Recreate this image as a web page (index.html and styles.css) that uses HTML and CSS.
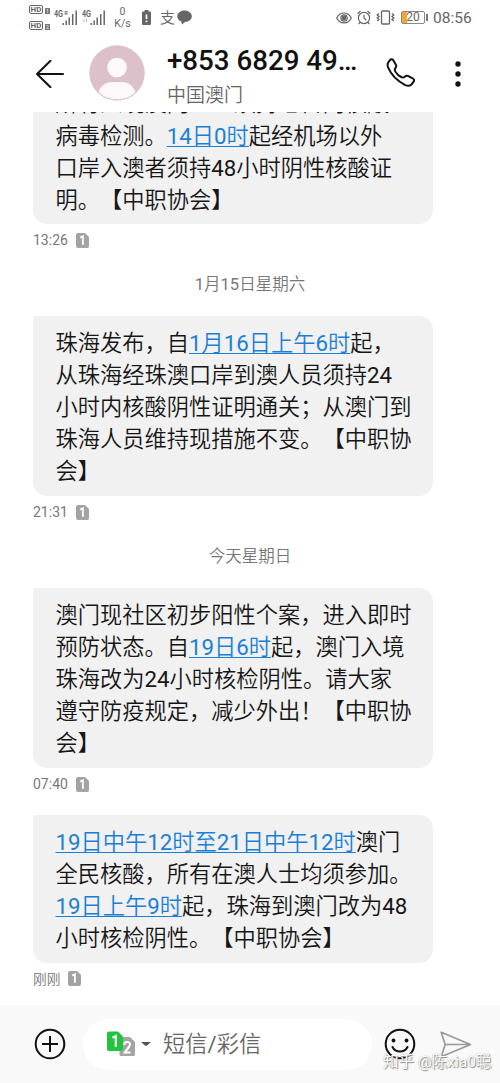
FILE: index.html
```
<!DOCTYPE html>
<html lang="zh-CN">
<head>
<meta charset="utf-8">
<title>短信</title>
<link rel="stylesheet" href="styles.css">
</head>
<body>
<svg width="0" height="0" class="defs">
  <symbol id="sim" viewBox="0 0 13 15"><path d="M2 0h7l4 4v9a2 2 0 0 1-2 2H2a2 2 0 0 1-2-2V2a2 2 0 0 1 2-2z" fill="#a3a3a3"/><path d="M4.2 4.6 6.9 3.2v8.6" fill="none" stroke="#fff" stroke-width="1.8"/></symbol>
</svg>
<div class="screen">
  <div class="status">
    <div class="hds"><div class="hd"><b>HD</b><i>1</i></div><div class="hd"><b>HD</b><i>2</i></div></div>
    <svg class="signal" width="24" height="17" viewBox="0 0 24 17"><text x="0" y="7.5" class="sig-text" textLength="9" lengthAdjust="spacingAndGlyphs">4G</text><text x="10.500" y="6" class="sig-small">R</text><path d="M9.200 14v2M12.200 11.500V16M15.200 8.500V16M18.700 5V16M22.200 1.500V16" stroke="#666" stroke-width="1.500"/></svg>
    <svg class="signal two" width="24" height="17" viewBox="0 0 24 17"><text x="0" y="7.5" class="sig-text" textLength="9" lengthAdjust="spacingAndGlyphs">4G</text><path d="M2 10v3m2.500-3v3" stroke="#bbb"/><path d="M9.200 14v2M12.200 11.500V16M15.200 8.500V16M18.700 5V16M22.200 1.500V16" stroke="#666" stroke-width="1.500"/></svg>
    <div class="rate"><span>0</span><span>K/s</span></div>
    <svg class="batt-alert" width="9" height="15" viewBox="0 0 9 15"><path d="M2.500 0h4v1.500H8q1 0 1 1V14q0 1-1 1H1q-1 0-1-1V2.500q0-1 1-1h1.500z" fill="#666"/><path d="M4.500 4.500v4.500m0 1.500v1.800" stroke="#fff" stroke-width="1.700"/></svg>
    <span class="zhi">支</span>
    <svg class="chat" width="15" height="15" viewBox="0 0 15 15"><path d="M7.500.5C3.400.5.300 3 .300 6.300c0 2.500 1.700 4.400 4 5.200L5 14.500l3-2.500c4-.1 6.800-2.500 6.800-5.700C14.800 3 11.600.5 7.500.5z" fill="#666"/></svg>
    <svg class="eye" width="16" height="12" viewBox="0 0 16 12" fill="none" stroke="#666" stroke-width="1.200"><path d="M.7 6C4-.7 12-.7 15.300 6 12 12.500 4 12.500.7 6z"/><circle cx="8" cy="6" r="3.200"/><circle cx="8" cy="6" r="1.800" fill="#666"/></svg>
    <svg class="alarm" width="14" height="15" viewBox="0 0 14 15" fill="none" stroke="#666" stroke-width="1.200"><circle cx="7" cy="8" r="5.600"/><path d="M7 4.800V8l2.200 2M.6 3.800 3.500 1M13.400 3.800 10.500 1M3 12.500l-1.300 1.500m9.300-1.500 1.300 1.500"/></svg>
    <svg class="vibrate" width="19" height="15" viewBox="0 0 19 15" fill="none" stroke="#666" stroke-width="1.300"><rect x="5.500" y="1" width="8" height="13" rx="1"/><path d="M3 3.500 1.200 5 3 6.500 1.200 8 3 9.500 1.200 11M16 3.500 17.800 5 16 6.500 17.800 8 16 9.500l1.800 1.500"/></svg>
    <div class="battery"><div class="cell">20</div><span class="nub"></span></div>
    <span class="clock">08:56</span>
  </div>
  <header class="header">
    <svg class="back" width="28" height="28" viewBox="0 0 28 28" fill="none" stroke="#111" stroke-width="2" stroke-linecap="round" stroke-linejoin="round"><path d="M27 14H1M14.500 .8 1 14l13.500 13.200"/></svg>
    <svg class="avatar" width="56" height="56" viewBox="0 0 56 56"><circle cx="28" cy="28" r="27.700" fill="#dcc0ca"/><circle cx="28" cy="22.500" r="9.800" fill="#fdf9fb"/><path d="M9.500 47C12 40 18 37 23 37h10c6 0 11 3.500 13.500 10C41.500 52 35 54.300 28 54.300S14.500 52 9.500 47z" fill="#fdf9fb"/></svg>
    <div class="who"><div class="number">+853 6829 49…</div><div class="place">中国澳门</div></div>
    <svg class="phone" width="30" height="30" viewBox="0 0 30 30" fill="none" stroke="#111" stroke-width="2" stroke-linejoin="round"><path d="M2.200 4.600 3.800 2.300C4.800 1 6.500 1 7.300 2.300L10 7c.6 1.200.3 2-.6 3-.9.900-.8 2 0 3.600 1.400 2.600 3.700 4.600 6.200 5.600 1.400.6 2.500.2 3.300-.6.900-.9 1.800-1.200 3-.7l4.800 2.400c1.400.700 1.700 2.200.9 3.300l-1.800 2.500c-1.400 2-3.900 2.200-7 .7C10.500 22.500 5.500 17.500 2.200 9.700c-.8-2-.8-3.700 0-5.100z"/></svg>
    <svg class="more" width="6" height="26" viewBox="0 0 6 26" fill="#111"><circle cx="3" cy="3" r="2.700"/><circle cx="3" cy="13" r="2.700"/><circle cx="3" cy="23" r="2.700"/></svg>
  </header>
  <main class="thread">
    <div class="bubble first"><div class="scrolled">所有入境澳门人士须持七日内核酸</div>病毒检测。<a>14日0时</a>起经机场以外<br>口岸入澳者须持48小时阴性核酸证<br>明。【中职协会】</div>
    <div class="meta">13:26<svg width="13" height="15"><use href="#sim"/></svg></div>
    <div class="day">1月15日星期六</div>
    <div class="bubble">珠海发布，自<a>1月16日上午6时</a>起，<br>从珠海经珠澳口岸到澳人员须持24<br>小时内核酸阴性证明通关；从澳门到<br>珠海人员维持现措施不变。【中职协<br>会】</div>
    <div class="meta">21:31<svg width="13" height="15"><use href="#sim"/></svg></div>
    <div class="day">今天星期日</div>
    <div class="bubble">澳门现社区初步阳性个案，进入即时<br>预防状态。自<a>19日6时</a>起，澳门入境<br>珠海改为24小时核检阴性。请大家<br>遵守防疫规定，减少外出！【中职协<br>会】</div>
    <div class="meta">07:40<svg width="13" height="15"><use href="#sim"/></svg></div>
    <div class="bubble last"><a>19日中午12时至21日中午12时</a>澳门<br>全民核酸，所有在澳人士均须参加。<br><a>19日上午9时</a>起，珠海到澳门改为48<br>小时核检阴性。【中职协会】</div>
    <div class="meta now">刚刚<svg width="13" height="15"><use href="#sim"/></svg></div>
  </main>
  <footer class="composer">
    <svg class="plus" width="32" height="32" viewBox="0 0 32 32" fill="none" stroke="#111" stroke-width="2"><circle cx="16" cy="16" r="14.300"/><path d="M16 8v16M8 16h16"/></svg>
    <div class="field">
      <svg class="sims" width="29" height="26" viewBox="0 0 29 26"><path d="M14 6h9l5 5v12.500q0 1.500-1.500 1.500H14q-1.500 0-1.500-1.500V7.500Q12.500 6 14 6z" fill="#a5a5a5"/><path d="M2 .5h9l5 5V18q0 2-2 2H2q-2 0-2-2V2.500q0-2 2-2z" fill="#22c43c"/><path d="M5.500 6.800 8.800 5v11" fill="none" stroke="#fff" stroke-width="2.200"/><path d="M17.200 14c0-4 5.800-4 5.800-.4 0 2.400-3.500 4.900-5.300 7.900h5.800" fill="none" stroke="#fff" stroke-width="2"/></svg>
      <svg class="caret" width="10" height="4" viewBox="0 0 10 4"><path d="M0 0h10L6 3.500q-1 .8-2 0z" fill="#555"/></svg>
      <span class="hint">短信/彩信</span>
    </div>
    <svg class="smile" width="32" height="32" viewBox="0 0 32 32" fill="none" stroke="#111" stroke-width="2"><circle cx="16" cy="16" r="14.300"/><path d="M8.500 19c3 6 12 6 15 0" stroke-linecap="round"/><g fill="#111" stroke="none"><circle cx="9.500" cy="12.500" r="1.900"/><circle cx="22.500" cy="12.500" r="1.900"/></g></svg>
    <svg class="send" width="32" height="27" viewBox="0 0 32 27" fill="none" stroke="#999" stroke-width="1.700" stroke-linejoin="round"><path d="M1.200 1.200 30.500 13.500 1.200 25.800l4-12.300zM5.200 13.500h25"/></svg>
    <div class="watermark">知乎 @陈xia0聪</div>
  </footer>
</div>
</body>
</html>
```

FILE: styles.css
```
* { box-sizing: border-box; }
body { margin: 0; background: #fff; font-family: Roboto, "Noto Sans CJK SC DemiLight", "Noto Sans CJK SC", sans-serif; text-spacing-trim: space-all; }
svg { display: block; flex: none; }
.defs { display: none; }
.screen { width: 500px; height: 1083px; display: flex; flex-direction: column; overflow: hidden; }

.status { height: 34px; flex: none; display: flex; align-items: center; padding: 1px 0 0 29px; color: #666; }
.hds { width: 21px; display: flex; flex-direction: column; gap: 7px; }
.hd { display: flex; align-items: flex-end; gap: 2px; height: 9px; }
.hd b { width: 14px; height: 9px; border: 1px solid #666; border-radius: 2px; font-size: 8px; line-height: 7.5px; text-align: center; }
.hd i { width: 5px; height: 6px; background: #777; color: #fff; font: 5px/6px Roboto, sans-serif; text-align: center; }
.signal { margin-left: 4px; }
.signal.two { margin-left: 4px; }
.sig-text { font: bold 9px Roboto, sans-serif; fill: #666; }
.sig-small { font: bold 5px Roboto, sans-serif; fill: #666; }
.rate { width: 17px; margin-left: 8px; display: flex; flex-direction: column; align-items: center; font-size: 10.500px; line-height: 12px; padding-top: 1px; }
.batt-alert { margin-left: 11px; }
.zhi { margin-left: 9px; width: 16px; font-size: 15px; line-height: 16px; font-weight: 500; }
.chat { margin-left: 1px; }
.eye { margin-left: 144px; }
.alarm { margin-left: 5px; }
.vibrate { margin-left: 5px; }
.battery { display: flex; align-items: center; margin-left: 6px; gap: 1px; }
.cell { width: 24px; height: 13px; border: 1px solid #888; border-radius: 2px; background: linear-gradient(90deg, #f5a62f 5px, #fff 5px); font-size: 12px; line-height: 11px; text-align: center; }
.nub { width: 2px; height: 7px; background: #777; }
.clock { margin-left: 5px; font-size: 15.500px; line-height: 18px; }

.header { height: 78px; flex: none; display: flex; align-items: flex-start; padding-left: 36px; background: #fff; }
.back { margin-top: 26px; }
.avatar { margin: 11px 0 0 25px; }
.who { margin: 11px 0 0 22px; width: 194px; white-space: nowrap; }
.number { font-size: 27.700px; line-height: 32px; font-weight: 500; color: #111; }
.place { font-size: 19px; line-height: 24px; margin-top: 7px; color: #666; }
.phone { margin: 24px 0 0 25px; }
.more { margin: 27px 0 0 39px; }

.thread { height: 893px; flex: none; overflow: hidden; display: flex; flex-direction: column; align-items: flex-start; padding-left: 33px; }
.bubble { flex: none; width: 400px; padding: 11px 0 9px 22.500px; background: #f1f1f1; border-radius: 2px 14px 14px 14px; font-size: 22.250px; line-height: 32px; color: #161616; white-space: nowrap; }
.bubble.first { margin-top: -36px; padding-bottom: 8px; }
.scrolled { margin-bottom: 1px; }
.bubble a { color: #1a7fd6; text-decoration: underline; text-decoration-thickness: 1px; text-underline-offset: 2px; }
.meta { flex: none; height: 32px; display: flex; align-items: center; gap: 8px; font-size: 14px; color: #777; }
.meta.now { font-size: 13.700px; height: 30px; }
.day { flex: none; align-self: stretch; padding-right: 33px; height: 60px; line-height: 57px; text-align: center; font-size: 16.500px; color: #777; }
.last { margin-top: 15px; }

.composer { position: relative; height: 78px; flex: none; background: #f9f9f9; display: flex; align-items: center; padding-left: 34px; }
.field { width: 289px; height: 51px; margin-left: 17px; border-radius: 26px; background: #fff; display: flex; align-items: center; padding-left: 24px; }
.caret { margin-left: 5px; }
.hint { margin-left: 12px; font-size: 22.250px; line-height: 32px; color: #666; white-space: nowrap; }
.smile { margin-left: 12px; }
.send { margin-left: 24px; }
.watermark { position: absolute; left: 383px; top: 47px; font-size: 15.500px; line-height: 20px; color: #fff; white-space: nowrap; text-shadow: 1px 1px 1px #888, 0 0 1px #999; }
```
